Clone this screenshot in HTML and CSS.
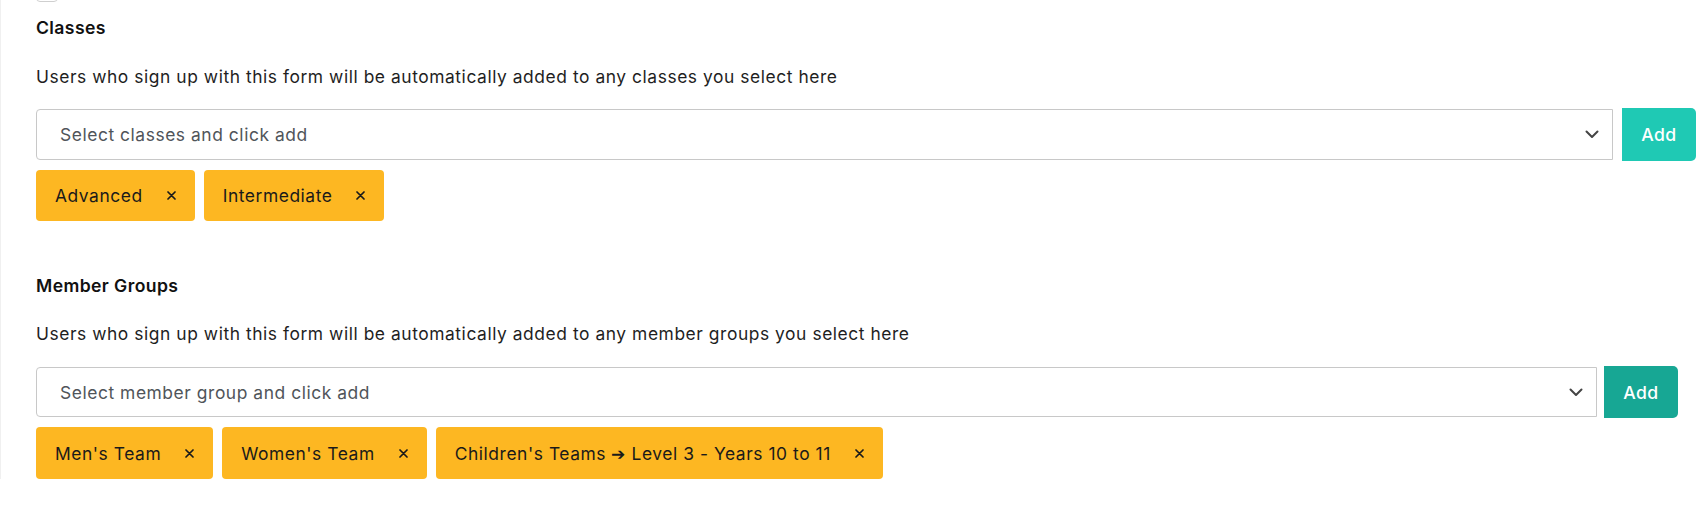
FILE: index.html
```html
<!DOCTYPE html>
<html lang="en">
<head>
<meta charset="utf-8">
<title>Form settings</title>
<link rel="stylesheet" href="styles.css">
</head>
<body>
<div class="page">
  <div class="checkbox"></div>

  <section class="block block-classes">
    <h3 class="block-title">Classes</h3>
    <p class="block-desc">Users who sign up with this form will be automatically added to any classes you select here</p>
    <div class="picker">
      <div class="select">
        <span class="select-placeholder">Select classes and click add</span>
        <svg class="chevron" width="14" height="9" viewBox="0 0 14 9"><path d="M1.5 1.5 L7 7 L12.5 1.5" fill="none" stroke="#444" stroke-width="2" stroke-linecap="round" stroke-linejoin="round"/></svg>
      </div>
      <button class="add-btn">Add</button>
    </div>
    <div class="tags">
      <span class="tag">Advanced<svg class="tag-x" width="9" height="9" viewBox="0 0 9 9"><path d="M1 1 L8 8 M8 1 L1 8" stroke="#1a1a1a" stroke-width="1.7" stroke-linecap="round"/></svg></span>
      <span class="tag">Intermediate<svg class="tag-x" width="9" height="9" viewBox="0 0 9 9"><path d="M1 1 L8 8 M8 1 L1 8" stroke="#1a1a1a" stroke-width="1.7" stroke-linecap="round"/></svg></span>
    </div>
  </section>

  <section class="block block-groups">
    <h3 class="block-title">Member Groups</h3>
    <p class="block-desc">Users who sign up with this form will be automatically added to any member groups you select here</p>
    <div class="picker picker-narrow">
      <div class="select">
        <span class="select-placeholder">Select member group and click add</span>
        <svg class="chevron" width="14" height="9" viewBox="0 0 14 9"><path d="M1.5 1.5 L7 7 L12.5 1.5" fill="none" stroke="#444" stroke-width="2" stroke-linecap="round" stroke-linejoin="round"/></svg>
      </div>
      <button class="add-btn add-btn-active">Add</button>
    </div>
    <div class="tags">
      <span class="tag">Men's Team<svg class="tag-x" width="9" height="9" viewBox="0 0 9 9"><path d="M1 1 L8 8 M8 1 L1 8" stroke="#1a1a1a" stroke-width="1.7" stroke-linecap="round"/></svg></span>
      <span class="tag">Women's Team<svg class="tag-x" width="9" height="9" viewBox="0 0 9 9"><path d="M1 1 L8 8 M8 1 L1 8" stroke="#1a1a1a" stroke-width="1.7" stroke-linecap="round"/></svg></span>
      <span class="tag">Children's Teams ➔ Level 3 - Years 10 to 11<svg class="tag-x" width="9" height="9" viewBox="0 0 9 9"><path d="M1 1 L8 8 M8 1 L1 8" stroke="#1a1a1a" stroke-width="1.7" stroke-linecap="round"/></svg></span>
    </div>
  </section>
</div>
</body>
</html>
```

FILE: styles.css
```css
* { box-sizing: border-box; }

html, body {
  margin: 0;
  padding: 0;
  background: #ffffff;
}

body {
  font-family: "Inter", "Open Sans", sans-serif;
  font-size: 17.6px;
  letter-spacing: 0.56px;
  color: #1d1d1d;
  overflow: hidden;
}

.page {
  padding: 0 8px 0 35px;
  border-left: 1px solid #f0f0f0;
}

.checkbox {
  width: 22px;
  height: 22px;
  margin-top: -20px;
  border: 1px solid #cfcfcf;
  border-radius: 4px;
}

.block-title {
  margin: 14px 0 0;
  font-size: 17.6px;
  line-height: 24px;
  font-weight: 600;
  letter-spacing: 0.4px;
  color: #111;
}

.block-groups .block-title {
  margin-top: 53px;
}

.block-desc {
  margin: 25px 0 20px;
  font-size: 17.4px;
  line-height: 24px;
  font-weight: 400;
  color: #1f1f1f;
}

.block-groups .block-desc {
  margin: 24px 0 21px;
}

.picker {
  display: flex;
  align-items: center;
  gap: 9px;
}

.picker-narrow {
  gap: 7px;
  margin-right: 18px;
}

.select {
  flex: 1;
  height: 51px;
  display: flex;
  align-items: center;
  justify-content: space-between;
  padding: 0 13px 0 23px;
  border: 1px solid #c8c8c8;
  border-radius: 4px 0 0 4px;
  background: #fff;
}

.picker-narrow .select {
  height: 50px;
}

.select-placeholder {
  font-size: 17.4px;
  color: #50555a;
}

.chevron {
  display: block;
}

.add-btn {
  width: 74px;
  height: 53px;
  margin: -1px 0;
  border: none;
  border-radius: 0 5px 5px 0;
  background: #1fc9b4;
  color: #fff;
  font-family: inherit;
  font-size: 17.6px;
  letter-spacing: 0.4px;
  font-weight: 500;
  padding: 0;
}

.add-btn-active {
  height: 52px;
  background: #17a794;
}

.tags {
  display: flex;
  gap: 9px;
  margin-top: 10px;
}

.tag {
  display: inline-flex;
  align-items: center;
  gap: 24px;
  height: 51px;
  padding: 0 19px;
  background: #fdb722;
  border-radius: 4px;
  font-size: 17.4px;
  color: #1a1a1a;
}

.block-groups .tag {
  height: 52px;
}

.tag-x {
  display: block;
}
```
